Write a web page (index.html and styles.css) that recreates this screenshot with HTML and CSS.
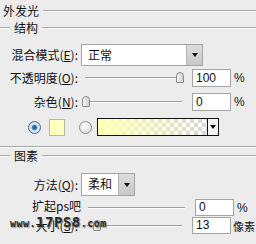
FILE: index.html
```html
<!DOCTYPE html>
<html lang="zh-CN">
<head>
    <meta charset="UTF-8">
    <title>外发光</title>
    <link rel="stylesheet" href="styles.css">
</head>
<body>
    <div class="panel">
        <div class="title"><span>外发光</span><i class="rule"></i></div>

        <div class="group-head"><i class="rule short"></i><span>结构</span><i class="rule"></i></div>

        <div class="row row-blend">
            <label class="lbl">混合模式(<u>E</u>):</label>
            <div class="select wide"><span>正常</span><b class="arrow"></b></div>
        </div>

        <div class="row row-opacity">
            <label class="lbl">不透明度(<u>O</u>):</label>
            <div class="slider"><i class="thumb" style="left: 94%"></i></div>
            <div class="num">100</div>
            <span class="unit">%</span>
        </div>

        <div class="row row-noise">
            <label class="lbl">杂色(<u>N</u>):</label>
            <div class="slider"><i class="thumb" style="left: -3%"></i></div>
            <div class="num">0</div>
            <span class="unit">%</span>
        </div>

        <div class="row row-color">
            <i class="radio on"></i>
            <i class="swatch"></i>
            <i class="radio"></i>
            <div class="gradient"><span class="fill"></span><b class="arrow"></b></div>
        </div>

        <div class="group-end"></div>

        <div class="group-head"><i class="rule short"></i><span>图素</span><i class="rule"></i></div>

        <div class="row row-method">
            <label class="lbl">方法(<u>Q</u>):</label>
            <div class="select narrow"><span>柔和</span><b class="arrow"></b></div>
        </div>

        <div class="row row-spread">
            <label class="lbl wm">扩起ps吧</label>
            <div class="slider"></div>
            <div class="num">0</div>
            <span class="unit">%</span>
        </div>

        <div class="row row-size">
            <label class="lbl">大小(<u>S</u>):</label>
            <div class="slider"><i class="thumb" style="left: 8%"></i></div>
            <div class="num">13</div>
            <span class="unit cjk">像素</span>
        </div>

        <!-- 水印 -->
        <div class="watermark"><small>www.</small>17PS8<small>.com</small></div>
    </div>
</body>
</html>
```

FILE: styles.css
```css
/* 图层样式面板 */
body {
    margin: 0;
    background-color: #ececec;
    font-family: "Noto Sans CJK SC", "DejaVu Sans", sans-serif;
    font-size: 12px;
    color: #111;
}

.panel {
    position: relative;
    width: 256px;
    height: 244px;
    overflow: hidden;
}

.rule {
    flex: 1;
    height: 0;
    border-top: 1px solid #a8a8a8;
    border-bottom: 1px solid #fafafa;
}

.rule.short {
    flex: 0 0 10px;
}

.title {
    display: flex;
    align-items: center;
    gap: 4px;
    height: 20px;
    padding-left: 3px;
    padding-top: 1px;
    box-sizing: border-box;
    line-height: 12px;
}

.group-head {
    display: flex;
    align-items: center;
    gap: 4px;
    height: 16px;
    line-height: 12px;
}

.row {
    display: flex;
    align-items: center;
}

.lbl {
    flex: 0 0 78px;
    text-align: right;
    white-space: nowrap;
    line-height: 12px;
}

.lbl.wm {
    text-align: left;
    padding-left: 32px;
    box-sizing: border-box;
    margin-top: -4px;
}

.row-blend { margin-top: 8px; height: 22px; }
.row-opacity { margin-top: 3px; height: 18px; }
.row-noise { margin-top: 6px; height: 18px; }
.row-color { margin-top: 7px; height: 18px; padding-left: 28px; }
.row-method { margin-top: 9px; height: 23px; }
.row-spread { margin-top: 3px; height: 17px; }
.row-size { margin-top: 1px; height: 17px; }

.select {
    display: flex;
    height: 100%;
    margin-left: 3px;
    box-sizing: border-box;
    border: 1px solid #a4a4a4;
    background-color: #fff;
}

.select span {
    flex: 1;
    padding-left: 6px;
    line-height: 20px;
}

.select.wide { width: 122px; }
.select.narrow { width: 54px; }

.select .arrow {
    position: relative;
    width: 15px;
    border-left: 1px solid #b4b4b4;
    background: linear-gradient(#dcdcdc, #c8c8c8);
}

.arrow::after {
    content: "";
    position: absolute;
    left: 50%;
    top: 50%;
    margin: -2px 0 0 -3px;
    border-left: 3px solid transparent;
    border-right: 3px solid transparent;
    border-top: 4px solid #111;
}

.slider {
    position: relative;
    flex: 0 0 97px;
    height: 0;
    margin-left: 7px;
    border-top: 1px solid #a0a0a0;
    border-bottom: 1px solid #fcfcfc;
}

.thumb {
    position: absolute;
    top: -6px;
    width: 6px;
    height: 9px;
    border: 1px solid #8a8a8a;
    border-radius: 4px 4px 1px 1px;
    background: linear-gradient(90deg, #f6f6f6, #cfcfcf);
}

.num {
    flex: 0 0 39px;
    height: 100%;
    margin-left: 10px;
    box-sizing: border-box;
    border: 1px solid #a4a4a4;
    background-color: #fff;
    padding-left: 3px;
    font-family: "Liberation Sans", sans-serif;
    font-size: 12px;
    line-height: 16px;
}

.row-spread .num, .row-size .num { line-height: 15px; }

.unit {
    margin-left: 3px;
    white-space: nowrap;
    font-family: "Liberation Sans", sans-serif;
    font-size: 12px;
}

.unit.cjk {
    margin-left: 2px;
    font-family: "Noto Sans CJK SC", sans-serif;
    font-size: 11px;
}

.radio {
    flex: 0 0 auto;
    width: 11px;
    height: 11px;
    border: 1px solid #8c8c8c;
    border-radius: 50%;
    background: radial-gradient(circle at 40% 35%, #ffffff, #d4d4d4);
}

.radio.on {
    border-color: #3c6a8e;
    background: radial-gradient(circle, #1e5f94 0, #2d79b2 2px, #e8eef4 3.5px, #cfd8e0 6px);
}

.swatch {
    flex: 0 0 auto;
    width: 14px;
    height: 15px;
    margin-left: 8px;
    border: 1px solid #b8b8a0;
    background-color: #ffffc0;
}

.row-color .radio + .gradient { margin-left: 5px; }
.swatch + .radio { margin-left: 14px; }

.gradient {
    display: flex;
    width: 122px;
    height: 18px;
    box-sizing: border-box;
    border: 1px solid #111;
}

.gradient .fill {
    flex: 1;
    background:
        linear-gradient(90deg, #ffffb8, rgba(255, 255, 184, 0)),
        repeating-conic-gradient(#d6d6d6 0 25%, #ffffff 0 50%) 0 0 / 8px 8px;
}

.gradient .arrow {
    position: relative;
    width: 10px;
    border-left: 1px solid #111;
    background-color: #f4f4f4;
}

.group-end {
    margin-top: 10px;
    height: 0;
    border-top: 1px solid #a8a8a8;
    border-bottom: 1px solid #fafafa;
}

.watermark {
    position: absolute;
    left: 10px;
    top: 214px;
    font-family: "DejaVu Sans Mono", monospace;
    font-weight: bold;
    font-size: 14px;
    letter-spacing: 0.5px;
    color: #2a2a2a;
    text-shadow: 1px 1px 1px #888;
}

.watermark small {
    font-size: 10px;
}
```
